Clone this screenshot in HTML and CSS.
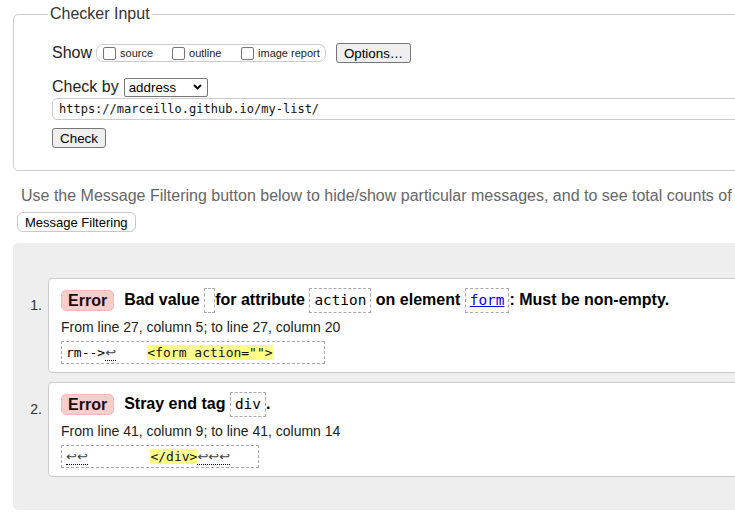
FILE: index.html
```html
<!DOCTYPE html>
<html lang="en">
<head>
<meta charset="utf-8">
<title>Nu Html Checker</title>
<link rel="stylesheet" href="styles.css">
</head>
<body>
<div class="page">
  <form class="checker">
    <fieldset class="input-set">
      <legend>Checker Input</legend>
      <div class="row show-row">
        <span class="lbl">Show</span>
        <span class="opts">
          <label class="opt opt-source"><input type="checkbox" class="cb"><span>source</span></label>
          <label class="opt opt-outline"><input type="checkbox" class="cb"><span>outline</span></label>
          <label class="opt"><input type="checkbox" class="cb"><span>image report</span></label>
        </span>
        <button type="button" class="btn btn-options">Options…</button>
      </div>
      <div class="row by-row">
        <span class="lbl">Check by</span>
        <span class="select">
          <span class="select-text">address</span>
          <svg class="chev" width="9" height="6" viewBox="0 0 9 6"><path d="M1 1 L4.5 4.5 L8 1" fill="none" stroke="#000" stroke-width="1.8"/></svg>
        </span>
      </div>
      <div class="url">https://marceillo.github.io/my-list/</div>
      <button type="button" class="btn btn-check">Check</button>
    </fieldset>
  </form>

  <p class="hint">Use the Message Filtering button below to hide/show particular messages, and to see total counts of</p>
  <button type="button" class="btn-filter">Message Filtering</button>

  <div class="results">
    <ol class="msgs">
      <li class="item">
        <span class="num">1.</span>
        <div class="msg">
          <p class="head"><strong class="badge">Error</strong> <span class="txt">Bad value <code class="c c-empty"></code>for attribute <code class="c">action</code> on element <code class="c"><a href="#">form</a></code>: Must be non-empty.</span></p>
          <p class="loc">From line 27, column 5; to line 27, column 20</p>
          <p class="extract"><code>rm--&gt;<b class="lf">↩</b>    <mark>&lt;form action=""&gt;</mark>      </code></p>
        </div>
      </li>
      <li class="item">
        <span class="num">2.</span>
        <div class="msg">
          <p class="head"><strong class="badge">Error</strong> <span class="txt">Stray end tag <code class="c">div</code>.</span></p>
          <p class="loc">From line 41, column 9; to line 41, column 14</p>
          <p class="extract"><code><b class="lf">↩↩</b>        <mark>&lt;/div&gt;</mark><b class="lf">↩↩↩</b>   </code></p>
        </div>
      </li>
    </ol>
  </div>
</div>
</body>
</html>
```

FILE: styles.css
```css
html {
  overflow: hidden;
}

body {
  margin: 0;
  font-family: "Liberation Sans", Arial, sans-serif;
  font-size: 16px;
  color: #000;
  background: #fff;
}

.page {
  width: 1100px;
}

.checker {
  margin: 0;
}

.input-set {
  margin: 5px 0 0 13px;
  padding: 20px 38px 22px 38px;
  border: 1px solid #ccc;
  border-radius: 5px;
}

.input-set legend {
  margin-left: -4px;
  padding: 0 2px;
  font-size: 16px;
  color: #333;
  line-height: 18px;
}

.row {
  display: flex;
  align-items: center;
}

.lbl {
  font-size: 16px;
  color: #222;
}

.show-row {
  height: 20px;
}

.opts {
  display: flex;
  align-items: center;
  height: 16px;
  margin-left: 4px;
  padding: 0 6px 0 6px;
  border: 1px solid #ccc;
  border-radius: 7px;
  width: 216px;
  font-size: 11px;
  color: #222;
  white-space: nowrap;
}

.opt {
  display: flex;
  align-items: center;
  white-space: nowrap;
  flex: none;
}

.opt-source {
  width: 69px;
}

.opt-outline {
  width: 69px;
}

.cb {
  appearance: none;
  -webkit-appearance: none;
  flex: none;
  width: 13px;
  height: 13px;
  margin: 0 4px 0 0;
  border: 1px solid #767676;
  border-radius: 2px;
  background: #fff;
}

.btn {
  font-family: "Liberation Sans", Arial, sans-serif;
  font-size: 13.33px;
  height: 20px;
  padding: 0 6px;
  background: #efefef;
  border: 1px solid #767676;
  border-radius: 3px;
  color: #000;
}

.btn-options {
  margin-left: 10px;
  width: 75px;
}

.by-row {
  margin-top: 14px;
  height: 20px;
}

.select {
  display: flex;
  align-items: center;
  justify-content: space-between;
  box-sizing: border-box;
  width: 84px;
  height: 19px;
  margin-left: 5px;
  padding: 0 5px 0 4px;
  border: 1px solid #767676;
  border-radius: 2px;
  font-size: 13.33px;
}

.url {
  box-sizing: border-box;
  margin-top: 1px;
  height: 22px;
  padding: 0 6px;
  border: 1px solid #ccc;
  border-radius: 5px;
  font-family: "DejaVu Sans Mono", monospace;
  font-size: 12px;
  line-height: 20px;
  color: #111;
}

.btn-check {
  margin-top: 8px;
  width: 54px;
  display: block;
}

.hint {
  margin: 16px 0 0 21px;
  font-size: 16px;
  line-height: 18px;
  color: #666;
  white-space: nowrap;
}

.btn-filter {
  display: block;
  margin: 7px 0 0 17px;
  height: 20px;
  padding: 0 7px;
  font-family: "Liberation Sans", Arial, sans-serif;
  font-size: 13px;
  background: #fff;
  border: 1px solid #c8c8c8;
  border-radius: 6px;
  color: #000;
}

.results {
  margin: 11px 0 0 13px;
  padding: 35px 0 33px 0;
  background: #eee;
  border-radius: 5px;
}

.msgs {
  list-style: none;
  margin: 0;
  padding: 0;
  display: flex;
  flex-direction: column;
  gap: 9px;
}

.item {
  display: flex;
  align-items: flex-start;
}

.num {
  box-sizing: border-box;
  width: 35px;
  padding: 19px 6px 0 0;
  text-align: right;
  font-size: 14px;
  color: #333;
}

.msg {
  flex: 1;
  background: #fff;
  border: 1px solid #ccc;
  border-radius: 4px;
  padding: 8px 12px 8px 12px;
}

.head {
  margin: 0;
  display: flex;
  align-items: center;
  height: 26px;
  font-weight: bold;
  white-space: pre;
}

.badge {
  display: inline-block;
  box-sizing: border-box;
  height: 21px;
  line-height: 19px;
  padding: 0 6px;
  background: #fcc;
  border: 1px solid #f3b9b9;
  border-radius: 5px;
  color: #111;
  margin-right: 10px;
}

.txt {
  white-space: pre;
}

.c {
  display: inline-block;
  box-sizing: border-box;
  height: 25px;
  min-width: 11px;
  vertical-align: middle;
  padding: 0 4px;
  border: 1px dashed #aaa;
  font-family: "DejaVu Sans Mono", monospace;
  font-size: 14.4px;
  font-weight: normal;
  line-height: 23px;
}

.c a {
  color: #00e;
}

.loc {
  margin: 5px 0 0 0;
  font-size: 14px;
  line-height: 18px;
  color: #222;
}

.extract {
  margin: 5px 0 0 0;
  display: inline-block;
  box-sizing: border-box;
  height: 23px;
  padding: 2px 4px;
  border: 1px dashed #aaa;
  white-space: pre;
}

.extract code {
  font-family: "DejaVu Sans Mono", monospace;
  font-size: 13px;
  line-height: 17px;
  display: block;
}

.extract mark {
  background: #ff8;
  color: #111;
}

.lf {
  font-family: "DejaVu Sans", sans-serif;
  font-size: 13px;
  font-weight: normal;
  color: #444;
  border-bottom: 1px dotted #000;
}
```
